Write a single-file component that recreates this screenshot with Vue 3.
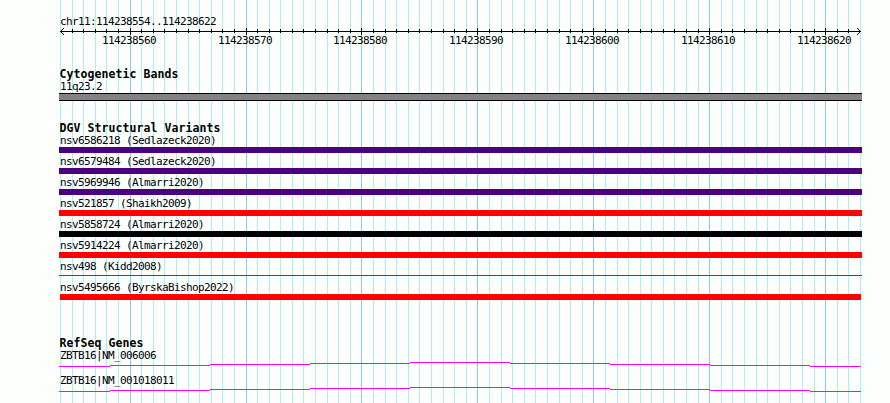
<template>
  <div class="browser">
    <svg class="grid" width="890" height="403" shape-rendering="crispEdges">
      <rect
        v-for="tick in ticks"
        :key="tick.pos"
        :x="tick.x"
        y="0"
        width="1"
        height="403"
        :class="tick.major ? 'grid-major' : 'grid-minor'"
      />
    </svg>

    <header class="ruler">
      <div class="label">chr11:114238554..114238622</div>
      <svg class="axis" width="890" height="20" shape-rendering="crispEdges">
        <rect x="60" y="5" width="801" height="1" />
        <rect
          v-for="tick in innerTicks"
          :key="tick.pos"
          :x="tick.x"
          :y="tick.major ? 2 : 3"
          width="1"
          :height="tick.major ? 7 : 4"
        />
        <rect v-for="n in 3" :key="'lu' + n" :x="60 + n" :y="5 - n" width="1" height="1" />
        <rect v-for="n in 3" :key="'ld' + n" :x="60 + n" :y="5 + n" width="1" height="1" />
        <rect v-for="n in 3" :key="'ru' + n" :x="860 - n" :y="5 - n" width="1" height="1" />
        <rect v-for="n in 3" :key="'rd' + n" :x="860 - n" :y="5 + n" width="1" height="1" />
        <text
          v-for="tick in majorTicks"
          :key="'t' + tick.pos"
          :x="tick.x - 28"
          y="18"
        >{{ tick.pos }}</text>
      </svg>
    </header>

    <section class="bands">
      <h3 class="title">Cytogenetic Bands</h3>
      <div class="label">11q23.2</div>
      <div class="band" />
    </section>

    <section class="variants">
      <h3 class="title">DGV Structural Variants</h3>
      <div v-for="v in variants" :key="v.name" class="variant">
        <div class="label">{{ v.name }} ({{ v.study }})</div>
        <div class="bar" :class="v.type" />
      </div>
    </section>

    <section class="genes">
      <h3 class="title">RefSeq Genes</h3>
      <div v-for="gene in genes" :key="gene" class="gene">
        <div class="label">{{ gene }}</div>
        <svg class="intron" width="802" height="5" shape-rendering="crispEdges">
          <rect
            v-for="s in intron"
            :key="s.x"
            :x="s.x"
            :y="s.y"
            :width="s.w"
            height="1"
          />
        </svg>
      </div>
    </section>
  </div>
</template>

<script setup>
const start = 114238554
const count = 69

const ticks = Array.from({ length: count + 1 }, (_, i) => ({
  pos: start + i,
  x: 60 + Math.round((i * 800) / count),
  major: (start + i) % 10 === 0
}))
const innerTicks = ticks.slice(1, -1)
const majorTicks = ticks.filter((t) => t.major)

const variants = [
  { name: 'nsv6586218', study: 'Sedlazeck2020', type: 'purple' },
  { name: 'nsv6579484', study: 'Sedlazeck2020', type: 'purple' },
  { name: 'nsv5969946', study: 'Almarri2020', type: 'purple' },
  { name: 'nsv521857', study: 'Shaikh2009', type: 'red' },
  { name: 'nsv5858724', study: 'Almarri2020', type: 'black' },
  { name: 'nsv5914224', study: 'Almarri2020', type: 'red' },
  { name: 'nsv498', study: 'Kidd2008', type: 'line' },
  { name: 'nsv5495666', study: 'ByrskaBishop2022', type: 'red inset' }
]

const genes = ['ZBTB16|NM_006006', 'ZBTB16|NM_001018011']

// shallow hat line, stepped one pixel at a time
const edges = [0, 51, 151, 251, 351, 451, 551, 651, 751, 802]
const levels = [4, 3, 2, 1, 0, 1, 2, 3, 4]
const intron = levels.map((y, i) => ({ x: edges[i], y, w: edges[i + 1] - edges[i] }))
</script>

<style>
body {
  margin: 0;
  background: #fdfffc;
}
</style>

<style scoped>
.browser {
  position: relative;
  width: 890px;
  height: 403px;
  overflow: hidden;
  background: #fdfffc;
  color: #000;
  font-family: "DejaVu Sans Mono", "Liberation Mono", monospace;
}

.grid {
  position: absolute;
  top: 0;
  left: 0;
}

.grid-minor {
  fill: #afeeee;
}

.grid-major {
  fill: #87ceeb;
}

.ruler,
.bands,
.variants,
.genes {
  position: relative;
}

.ruler {
  height: 54px;
  padding-top: 15px;
}

.axis {
  display: block;
  margin-top: -1px;
}

.axis text,
.label {
  font-size: 11px;
  letter-spacing: -0.622px;
}

.label {
  height: 12px;
  padding-left: 60px;
  line-height: 14px;
  white-space: pre;
}

.title {
  height: 12px;
  margin: 0;
  padding-left: 59.5px;
  font-size: 11.5px;
  font-weight: 700;
  letter-spacing: 0.077px;
  line-height: 12px;
}

.bands {
  height: 55px;
}

.bands,
.variants {
  margin-top: -1px;
}

.band {
  box-sizing: border-box;
  width: 803px;
  height: 8px;
  margin: 1px 0 0 59px;
  border: solid #000;
  border-width: 1px 0;
  background: #848084;
}

.variants {
  height: 215px;
}

.variant {
  height: 21px;
}

.bar {
  width: 803px;
  height: 6px;
  margin: 1px 0 0 59px;
}

.purple {
  background: #4b0082;
}

.red {
  background: #f00;
}

.black {
  background: #000004;
}

.line {
  height: 1px;
  margin-top: 3px;
  background: #dc0a1e;
}

.inset {
  width: 801px;
  margin-left: 60px;
}

.gene {
  height: 25px;
}

.intron {
  display: block;
  margin: 1px 0 0 59px;
  fill: #f0f;
}
</style>
